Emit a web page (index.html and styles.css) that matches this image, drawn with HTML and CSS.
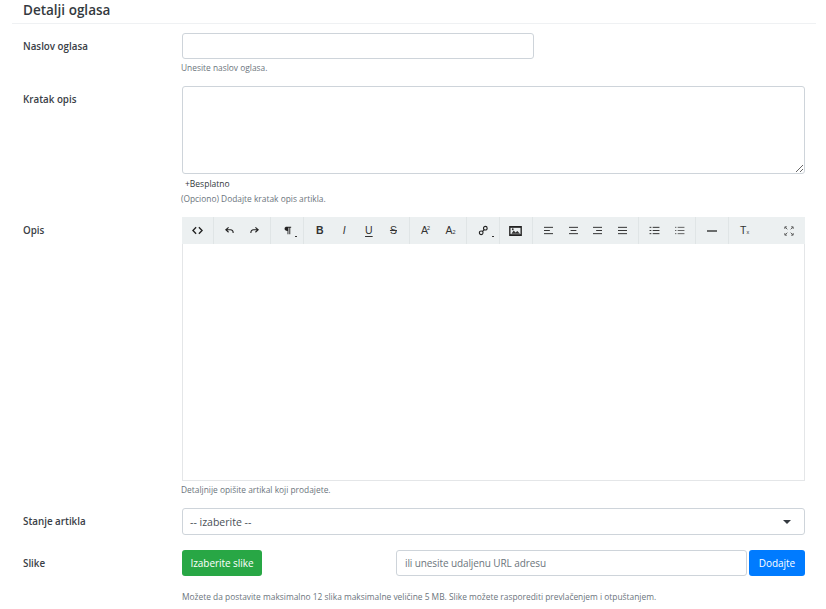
FILE: index.html
```html
<!DOCTYPE html>
<html lang="sr">
<head>
<meta charset="utf-8">
<title>Detalji oglasa</title>
<link rel="stylesheet" href="styles.css">
</head>
<body>
<main class="page">
  <h2 class="title">Detalji oglasa</h2>
  <div class="row row-name">
    <label class="label">Naslov oglasa</label>
    <div class="field">
      <input class="control control-half" type="text">
      <p class="help">Unesite naslov oglasa.</p>
    </div>
  </div>
  <div class="row row-short">
    <label class="label">Kratak opis</label>
    <div class="field">
      <textarea class="control area"></textarea>
      <div class="tag">+Besplatno</div>
      <p class="help help-tag">(Opciono) Dodajte kratak opis artikla.</p>
    </div>
  </div>
  <div class="row row-desc">
    <label class="label">Opis</label>
    <div class="field">
      <div class="editor">
        <div class="toolbar">
          <div class="group group-first"><span class="tool"><svg class="ico" viewBox="0 0 12 12"><path d="M4.500 2.500 1 6l3.500 3.500M7.500 2.500 11 6 7.500 9.500"/></svg></span></div>
          <div class="group">
            <span class="tool"><svg class="ico thin" viewBox="0 0 12 12"><path d="M5 2.500 2 5.200l3 2.700M2.500 5.200H7c2 0 3 1.300 3 3.500"/></svg></span>
            <span class="tool"><svg class="ico thin" viewBox="0 0 12 12"><path d="M7 2.500l3 2.700-3 2.700M9.500 5.200H5c-2 0-3 1.300-3 3.500"/></svg></span>
          </div>
          <div class="group"><span class="tool drop"><svg class="ico fill" viewBox="0 0 12 12"><path d="M5 2h5v1H9v7H8V3H7v7H6V6.500C4 6.500 2.800 5.700 2.800 4.200S4 2 5 2z"/></svg></span></div>
          <div class="group">
            <span class="tool tx tx-b">B</span>
            <span class="tool tx tx-i">I</span>
            <span class="tool tx tx-u">U</span>
            <span class="tool tx tx-s">S</span>
          </div>
          <div class="group">
            <span class="tool tx tx-a">A<span class="mini mini-up">2</span></span>
            <span class="tool tx tx-a">A<span class="mini mini-down">2</span></span>
          </div>
          <div class="group"><span class="tool drop"><svg class="ico thin" viewBox="0 0 12 12"><circle cx="8" cy="3.500" r="2"/><circle cx="3.500" cy="8.500" r="2"/><path d="M6.700 5 5 7"/></svg></span></div>
          <div class="group"><span class="tool"><svg class="ico-img" viewBox="0 0 14 11"><path class="img-frame" d="M0 0h14v11H0z"/><path class="img-in" d="M1.500 2h11v7h-11z"/><path class="img-fig" d="M2.500 8.500 5 5l2 2.200L9 5.500l3 3z"/><circle class="img-fig" cx="4" cy="3.600" r="1"/></svg></span></div>
          <div class="group">
            <span class="tool"><svg class="ico bars" viewBox="0 0 12 10"><path d="M1 1.500h10M1 5h6.500M1 8.500h10"/></svg></span>
            <span class="tool"><svg class="ico bars" viewBox="0 0 12 10"><path d="M1 1.500h10M2.800 5h6.400M1 8.500h10"/></svg></span>
            <span class="tool"><svg class="ico bars" viewBox="0 0 12 10"><path d="M1 1.500h10M4.500 5H11M1 8.500h10"/></svg></span>
            <span class="tool"><svg class="ico bars" viewBox="0 0 12 10"><path d="M1 1.500h10M1 5h10M1 8.500h10"/></svg></span>
          </div>
          <div class="group">
            <span class="tool"><svg class="ico bars" viewBox="0 0 12 10"><path d="M4 1.500h7.500M4 5h7.500M4 8.500h7.500M.5 1.500h2M.5 5h2M.5 8.500h2"/></svg></span>
            <span class="tool"><svg class="ico bars light" viewBox="0 0 12 10"><path d="M4 1.500h7.500M4 5h7.500M4 8.500h7.500M1 1.500h1.500M1 5h1.500M1 8.500h1.500"/></svg></span>
          </div>
          <div class="group"><span class="tool"><svg class="ico rule" viewBox="0 0 12 10"><path d="M1 5h10"/></svg></span></div>
          <div class="group group-last">
            <span class="tool tx tx-clear">T<span class="mini mini-down">x</span></span>
            <span class="tool tool-end"><svg class="ico fs" viewBox="0 0 12 12"><path d="M1 3.500V1h2.500M8.500 1H11v2.500M1 8.500V11h2.500M11 8.500V11H8.500M1.500 1.500 4 4M10.500 1.500 8 4M1.500 10.500 4 8M10.500 10.500 8 8"/></svg></span>
          </div>
        </div>
        <div class="editor-body"></div>
      </div>
      <p class="help help-editor">Detaljnije opišite artikal koji prodajete.</p>
    </div>
  </div>
  <div class="row row-state">
    <label class="label">Stanje artikla</label>
    <div class="field">
      <div class="control select"><span>-- izaberite --</span><span class="caret"></span></div>
    </div>
  </div>
  <div class="row row-images">
    <label class="label">Slike</label>
    <div class="field">
      <div class="image-bar">
        <button class="btn btn-green" type="button">Izaberite slike</button>
        <div class="url-group">
          <input class="control url" type="text" placeholder="ili unesite udaljenu URL adresu">
          <button class="btn btn-blue" type="button">Dodajte</button>
        </div>
      </div>
      <p class="help help-images">Možete da postavite maksimalno 12 slika maksimalne veličine 5 MB. Slike možete rasporediti prevlačenjem i otpuštanjem.</p>
    </div>
  </div>
</main>
</body>
</html>
```
FILE: styles.css
```css
* { box-sizing: border-box; }
html, body { margin: 0; padding: 0; background: #fff; }
body { font-family: "Open Sans", "Noto Sans", sans-serif; color: #212529; height: 609px; overflow: hidden; }
.page { padding: 0 21px 0 12px; }
.title { margin: 0 -11px 0 0; height: 24px; padding: 0 0 0 11px; font-size: 13.500px; line-height: 20px; font-weight: 600; border-bottom: 1px solid #eff1f3; color: #343a40; }
.row { display: flex; }
.label { width: 170px; padding: 6px 0 0 11px; font-size: 9.800px; line-height: 16px; font-weight: 600; color: #3a4046; flex: none; }
.field { flex: 1; min-width: 0; }
.row-name { margin-top: 9px; }
.row-short { margin-top: 12px; }
.row-desc { margin-top: 12px; }
.row-state { margin-top: 12px; }
.row-images { margin-top: 15px; }
.control { display: block; width: 100%; border: 1px solid #ced4da; border-radius: 3px; background: #fff; font-family: inherit; color: #495057; outline: none; margin: 0; }
.control-half { width: 352px; height: 26px; }
.help { margin: 0 0 0 -1px; font-size: 8.400px; line-height: 12px; color: #6c757d; }
.row-name .help { margin-top: 3px; }
.area { height: 88px; resize: vertical; }
.tag { margin-top: 3px; padding-left: 3px; font-size: 8.500px; line-height: 13px; color: #343a40; }
.help-tag { margin-top: 3px; }
.editor { border: 1px solid #e4e6e8; height: 264px; display: flex; flex-direction: column; }
.toolbar { display: flex; height: 27px; background: #ecf0f1; flex: none; margin: -1px -1px 0 -1px; }
.group { display: flex; padding: 0 3.500px; border-right: 1px solid #e0e5e6; flex: none; align-items: center; }
.group-first { padding-left: 3px; }
.group-last { border-right: 0; flex: 1; }
.tool { width: 24.600px; height: 27px; display: flex; align-items: center; justify-content: center; position: relative; flex: none; }
.tool-end { margin-left: auto; }
.drop::after { content: ""; position: absolute; right: 2px; bottom: 7px; width: 2px; height: 1.500px; background: #333; }
.ico { width: 11px; height: 11px; fill: none; stroke: #222; stroke-width: 1.500; }
.ico.thin { stroke-width: 1.200; }
.ico.fill { fill: #222; stroke: none; }
.ico.bars { width: 11px; height: 9px; stroke-width: 1.100; stroke: #333; }
.ico.bars.light { stroke-width: 1; stroke: #555; }
.ico.rule { width: 12px; height: 10px; stroke-width: 1.400; stroke: #333; }
.ico.fs { stroke-width: 1; width: 10px; height: 10px; stroke: #444; }
.ico-img { width: 13px; height: 10px; }
.img-frame { fill: #222; }
.img-in { fill: #ecf0f1; }
.img-fig { fill: #333; }
.tx { font-family: "Liberation Sans", sans-serif; font-size: 10.500px; line-height: 1; color: #333; }
.tx-b { font-weight: 700; }
.tx-i { font-style: italic; }
.tx-u { text-decoration: underline; text-underline-offset: 2px; }
.tx-s { text-decoration: line-through; }
.mini { font-size: 5.500px; position: relative; }
.mini-up { top: -2px; left: -1px; }
.mini-down { top: 2px; }
.editor-body { flex: 1; background: #fff; }
.help-editor { margin-top: 3px; }
.select { height: 27px; display: flex; align-items: center; justify-content: space-between; padding: 0 13px 0 7px; font-size: 10.500px; }
.caret { width: 0; height: 0; border-left: 4px solid transparent; border-right: 4px solid transparent; border-top: 4px solid #343a40; }
.image-bar { display: flex; justify-content: space-between; }
.btn { height: 26px; border: 0; border-radius: 3px; color: #fff; font-family: inherit; font-size: 10px; font-weight: 500; letter-spacing: -.05px; padding: 0; }
.btn-green { width: 80px; background: #28a745; }
.btn-blue { width: 56px; background: #007bff; }
.url-group { display: flex; gap: 2px; width: 409px; }
.url { flex: 1; min-width: 0; height: 26px; padding: 0 8px; font-size: 10px; letter-spacing: -.1px; }
.url::placeholder { color: #6c757d; opacity: 1; }
.help-images { margin-top: 15px; margin-left: 0; }
```
